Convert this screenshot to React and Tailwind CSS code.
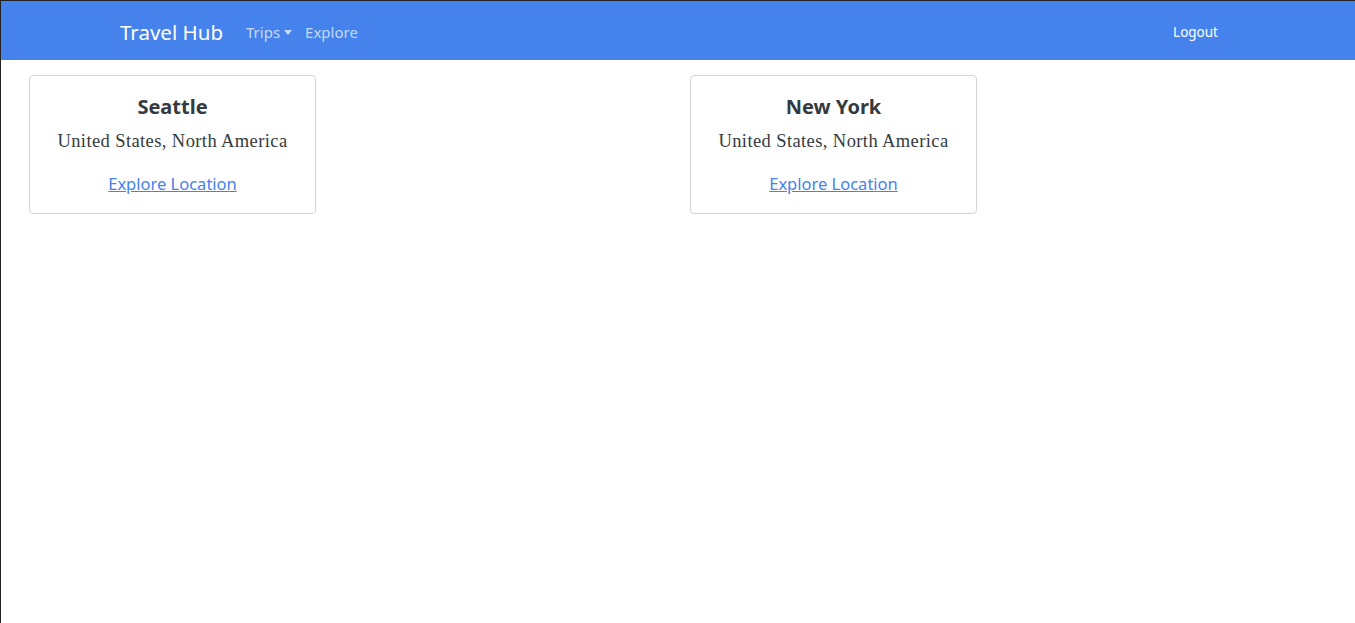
const sans = { fontFamily: '"Noto Sans", "Open Sans", sans-serif' }

const places = [
  { city: 'Seattle', region: 'United States, North America' },
  { city: 'New York', region: 'United States, North America' },
]

function Navbar() {
  return (
    <nav className="h-[59px] bg-[#4582ec] pt-[3px] font-['Noto_Sans',sans-serif]">
      <div className="mx-auto flex h-full max-w-[1140px] items-center px-[12px]">
        <a className="mr-[23px] text-[20.5px] text-white">Travel Hub</a>
        <div className="flex items-center gap-[13px] text-[15px] text-white/70">
          <span className="flex items-center">
            Trips
            <span className="ml-[4px] mt-[1px] inline-block border-x-[4px] border-t-[5px] border-x-transparent border-t-white/70" />
          </span>
          <span>Explore</span>
        </div>
        <a className="ml-auto mr-[18px] text-[13.5px] text-white">Logout</a>
      </div>
    </nav>
  )
}

function PlaceCard({ city, region }) {
  return (
    <div className="flex w-[287px] flex-col items-center rounded-[4px] border border-[#d4d4d4] px-[16px] pt-[17px] pb-[18px] text-[#343a40]">
      <h3 className="text-[20px] leading-[28px] font-bold" style={sans}>
        {city}
      </h3>
      <p className="mt-[8px] text-[18.5px] leading-[24px] font-['Liberation_Serif',serif] tracking-[0.4px]">{region}</p>
      <a
        href="#"
        className="mt-[20px] text-[16.5px] leading-[22px] text-[#4582ec] underline"
        style={sans}
      >
        Explore Location
      </a>
    </div>
  )
}

export default function App() {
  return (
    <div className="min-h-[623px] border-t border-l border-[#222] bg-white">
      <Navbar />
      <main className="grid grid-cols-2 gap-6 px-[28px] pt-[15px]">
        {places.map((p) => (
          <PlaceCard key={p.city} {...p} />
        ))}
      </main>
    </div>
  )
}
